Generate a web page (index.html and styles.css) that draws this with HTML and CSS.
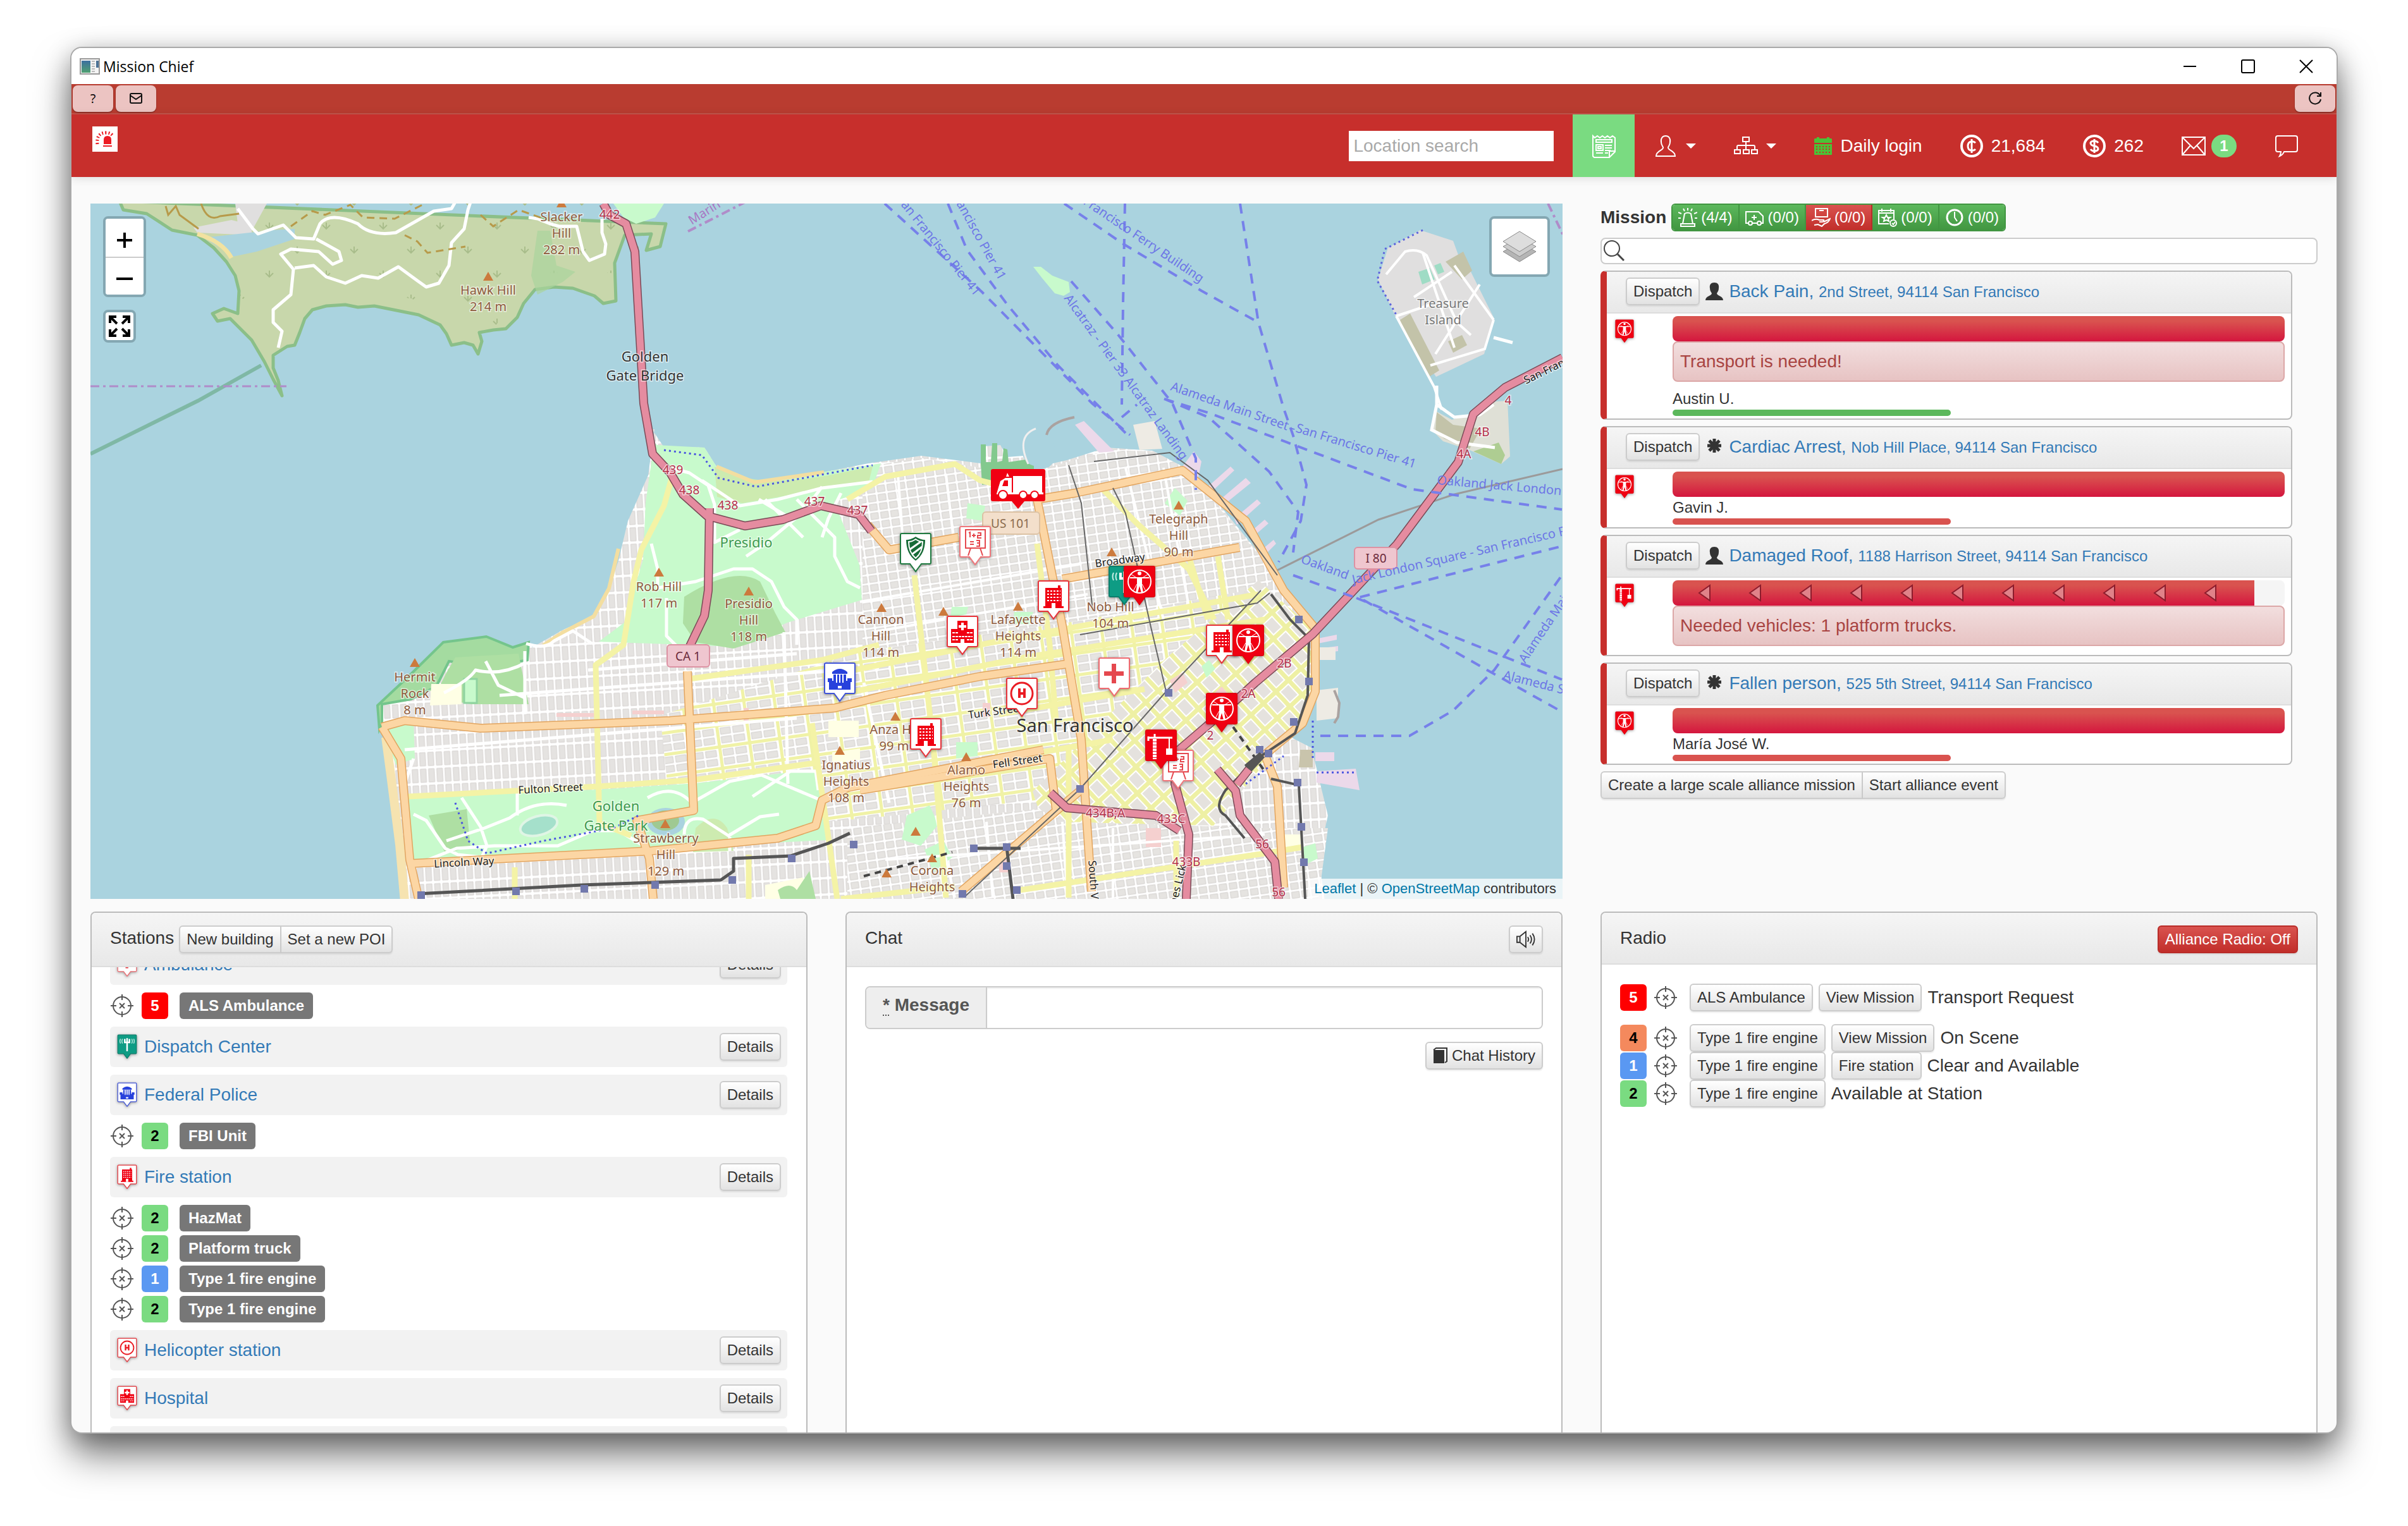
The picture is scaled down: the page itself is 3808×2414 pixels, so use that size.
FILE: index.html
```html
<!DOCTYPE html>
<html lang="en">
<head>
<meta charset="utf-8">
<title>Mission Chief</title>
<link rel="stylesheet" href="styles.css">
</head>
<body>
<svg class="sprite" width="0" height="0" aria-hidden="true">
  <defs>
    <path id="pin-shape" d="M4 2h44a2 2 0 0 1 2 2v44a2 2 0 0 1-2 2H35l-9 12-9-12H4a2 2 0 0 1-2-2V4a2 2 0 0 1 2-2z"/>
    <symbol id="pin-fire" viewBox="0 0 52 65">
      <use href="#pin-shape" fill="#fff" stroke="#e8333a" stroke-width="2"/>
      <path fill="#f00012" d="M13 13h20V9h4v4h2v29h3v3H10v-3h3z"/>
      <path stroke="#fff" stroke-width="1" stroke-dasharray="1 3" d="M17 14v20" opacity="0"/>
      <path stroke="#fff" stroke-width="2" stroke-dasharray="3 2" d="M16 18h21M16 23h21M16 28h21M16 33h21"/>
      <path fill="#fff" d="M23 37h6v8h-6z"/>
    </symbol>
    <symbol id="pin-hospital" viewBox="0 0 52 65">
      <use href="#pin-shape" fill="#fff" stroke="#e8333a" stroke-width="2"/>
      <path fill="#f00012" d="M18 9h16v13h10v22H29v-6h-6v6H8V22h10z"/>
      <path fill="#fff" d="M24 12h4v4h4v4h-4v4h-4v-4h-4v-4h4z"/>
      <path stroke="#fff" stroke-width="2" stroke-dasharray="4 1" d="M10 28h9M33 28h9M10 34h32M10 39h9M33 39h9"/>
    </symbol>
    <symbol id="pin-federal" viewBox="0 0 52 65">
      <use href="#pin-shape" fill="#fff" stroke="#4054d8" stroke-width="2"/>
      <path fill="#2741dc" d="M14 16q12-10 24 0v3H14zM16 20h4v15h-4zM22 20h3v15h-3zM27 20h3v15h-3zM32 20h4v15h-4zM7 26h7v4h24v-4h7v6h-2v12H9V32H7z"/>
      <path fill="#fff" d="M20 20h2v13h-2zM25 20h2v13h-2zM30 20h2v13h-2zM23 38h6v4h-6z"/>
    </symbol>
    <symbol id="pin-heli" viewBox="0 0 52 65">
      <use href="#pin-shape" fill="#fff" stroke="#e8333a" stroke-width="2"/>
      <circle cx="26" cy="26" r="17" fill="none" stroke="#ea1c24" stroke-width="3"/>
      <path fill="none" stroke="#ea1c24" stroke-width="4" d="M22 18v15M30 18v15M22 26h8"/>
    </symbol>
    <symbol id="pin-cross" viewBox="0 0 52 65">
      <use href="#pin-shape" fill="#fff" stroke="#f06a70" stroke-width="2"/>
      <path fill="#e5484e" d="M22 11h7v12h12v7H29v12h-7V30H10v-7h12z"/>
    </symbol>
    <symbol id="pin-school" viewBox="0 0 52 65">
      <use href="#pin-shape" fill="#fff" stroke="#f0777c" stroke-width="2"/>
      <path fill="none" stroke="#e5484e" stroke-width="2" d="M11 7h31v29H11zM19 36l-4 12M34 36l4 12M16 12l2-1v8M24 13v6M21 16h6M30 12h5v4h-5v4h6M18 26h6M18 30h6M28 24h5v9h-5M29 28h4"/>
    </symbol>
    <symbol id="pin-shield" viewBox="0 0 52 65">
      <use href="#pin-shape" fill="#fff" stroke="#1f7a40" stroke-width="2"/>
      <path fill="#176b37" d="M26 7q8 5 15 5 0 22-15 33Q11 34 11 12q7 0 15-5z"/>
      <path fill="none" stroke="#fff" stroke-width="2" d="M26 11q6 4 11 4 0 17-11 26Q15 32 15 15q5 0 11-4z"/>
      <path stroke="#fff" stroke-width="3" d="M17 27l17-12M20 35l16-12"/>
    </symbol>
    <symbol id="pin-dispatch" viewBox="0 0 52 65">
      <use href="#pin-shape" fill="#0e9c84" stroke="#0b7f6c" stroke-width="2"/>
      <path fill="none" stroke="#fff" stroke-width="4" d="M26 20v24M20 12v9h12v-9M26 10v10"/>
      <path fill="none" stroke="#c6efe6" stroke-width="2" d="M14 12q-3 6 0 12M9 12q-3 6 0 12M38 12q3 6 0 12M43 12q3 6 0 12"/>
    </symbol>
    <symbol id="pin-person" viewBox="0 0 52 65">
      <use href="#pin-shape" fill="#f00012" stroke="#e30010" stroke-width="2"/>
      <circle cx="26" cy="26" r="18" fill="none" stroke="#fff" stroke-width="2"/>
      <circle cx="26" cy="13" r="3" fill="#fff"/>
      <path fill="#fff" d="M11 19h30v2H30v11l2 12h-3l-3-11-3 11h-3l2-12V21H11z"/>
      <path fill="none" stroke="#fff" d="M12 14l11 7M40 14l-11 7M22 30l-6 11M30 30l6 11"/>
    </symbol>
    <symbol id="pin-crane" viewBox="0 0 52 65">
      <use href="#pin-shape" fill="#f00012" stroke="#e30010" stroke-width="2"/>
      <path fill="none" stroke="#fff" stroke-width="3" d="M6 14h38M6 12v7M16 8v6"/>
      <path stroke="#fff" stroke-width="6" stroke-dasharray="4 1" d="M16 16v32"/>
      <path stroke="#fff" stroke-width="2" d="M39 14v18"/>
      <path fill="#fff" d="M34 31h10v10H34z"/>
    </symbol>
    <symbol id="target" viewBox="0 0 38 38">
      <circle cx="19" cy="19" r="14" fill="none" stroke="#555" stroke-width="2"/>
      <path stroke="#555" stroke-width="2" d="M19 1v9M19 28v9M1 19h9M28 19h9M15 15l8 8M23 15l-8 8"/>
    </symbol>
    <symbol id="user" viewBox="0 0 30 30">
      <path d="M15 1c5 0 8 3 7 9 0 4-2 6-3 8 0 4 10 4 10 11H1c0-7 10-7 10-11-1-2-3-4-3-8-1-6 2-9 7-9z"/>
    </symbol>
    <symbol id="asterisk" viewBox="0 0 30 30">
      <path stroke="#333" stroke-width="5" d="M15 2v22M4 13h22M7 5l16 16M23 5L7 21"/>
    </symbol>
  </defs>
</svg>

<main class="window">
  <header class="titlebar">
    <svg class="app-icon" viewBox="0 0 32 26" aria-hidden="true">
      <defs><linearGradient id="app" x2="0" y2="1"><stop stop-color="#3b6fa0"/><stop offset="1" stop-color="#4fa070"/></linearGradient></defs>
      <path fill="#f4f4f4" stroke="#999" stroke-width="2" d="M1 1h30v24H1z"/>
      <path fill="url(#app)" d="M3 4h14v19H3z"/>
      <path stroke="#bbb" stroke-width="2" d="M19 5h5M19 9h5M19 13h5M19 17h5M19 21h5"/>
      <path fill="#4c7396" d="M26 4h4v11h-4z"/>
    </svg>
    <h1 class="window-title">Mission Chief</h1>
    <div class="window-controls">
      <button class="window-button" aria-label="Minimize"><svg viewBox="0 0 24 24"><path d="M2 12h20"/></svg></button>
      <button class="window-button" aria-label="Maximize"><svg viewBox="0 0 24 24"><rect x="2" y="2" width="20" height="20" rx="2"/></svg></button>
      <button class="window-button" aria-label="Close"><svg viewBox="0 0 24 24"><path d="M2 2l20 20M22 2L2 22"/></svg></button>
    </div>
  </header>

  <div class="toolbar">
    <button class="tool-button">?</button>
    <button class="tool-button" aria-label="Mail"><svg viewBox="0 0 24 24"><rect x="3" y="4" width="18" height="15" rx="2"/><path d="M3 7l9 6 9-6"/></svg></button>
    <button class="tool-button tool-end" aria-label="Reload"><svg viewBox="0 0 24 24"><path d="M20 7a9 9 0 1 0 1 6M21 2v6h-6"/></svg></button>
  </div>

  <nav class="navbar">
    <a class="brand" href="#" aria-label="Home"><svg viewBox="0 0 40 40"><path fill="#ec1c24" d="M18 28v-7q0-6 6-6t6 6v7zM17 30h14v2H17z"/><path fill="none" stroke="#ec1c24" stroke-width="5" stroke-dasharray="2 3" d="M8 28q-2-18 14-18 8 0 11 6"/></svg></a>
    <input class="location" type="text" placeholder="Location search" aria-label="Location search">
    <a class="nav-item active" href="#" aria-label="News"><svg class="nav-icon" viewBox="0 0 38 38"><path d="M2 3l3 3 4-3 4 3 4-3 4 3 4-3 4 3 4-3 4 3v22l-9 9H4l-2-2zM37 27h-9v9M7 9h25v4H7zM7 17h11v9H7zM10 20h5v3h-5zM21 18h11M21 22h11M21 26h9M7 30h11M21 30h5"/></svg></a>
    <a class="nav-item" href="#" aria-label="Profile"><svg class="nav-icon" viewBox="0 0 38 38"><path d="M19 3c5 0 8 4 7 10 0 4-2 6-3 8-1 5 11 5 11 14H4c0-9 12-9 11-14-1-2-3-4-3-8-1-6 2-10 7-10z"/></svg><span class="caret"></span></a>
    <a class="nav-item" href="#" aria-label="Alliance"><svg class="nav-icon" viewBox="0 0 38 38"><path d="M14 5h10v7H14zM19 12v13M5 25v-5q0-2 2-2h24q2 0 2 2v5M1 25h9v6H1zM15 25h9v6h-9zM28 25h9v6h-9z"/></svg><span class="caret"></span></a>
    <a class="nav-item" href="#"><svg class="calendar" viewBox="0 0 28 30"><path fill="#4bc237" d="M0 4q0-1 2-1h2V1h4v2h12V1h4v2h2q2 0 2 1v6H0zM0 12h28v16q0 1-1 1H1q-1 0-1-1z"/><path stroke="#c72f2c" stroke-width="2" stroke-dasharray="2 3" d="M3 16h22M3 20h22M3 25h22"/></svg>Daily login</a>
    <a class="nav-item" href="#"><svg class="coin" viewBox="0 0 36 36"><circle cx="18" cy="18" r="16"/><path d="M24 13q-3-3-7-2-5 1-5 7t5 7q4 1 7-2M18 7v22"/></svg>21,684</a>
    <a class="nav-item" href="#"><svg class="coin" viewBox="0 0 36 36"><circle cx="18" cy="18" r="16"/><path d="M24 13q-2-3-6-3-5 0-6 3 0 4 6 5t6 5q-1 3-6 3-4 0-6-3M18 7v22"/></svg>262</a>
    <a class="nav-item mail" href="#" aria-label="Messages"><svg class="nav-icon" viewBox="0 0 38 38"><path d="M1 5h36v28H1zM1 5l18 18L37 5M1 33l13-15M37 33L24 18"/></svg><span class="count">1</span></a>
    <a class="nav-item" href="#" aria-label="Chat"><svg class="nav-icon" viewBox="0 0 38 38"><path d="M5 3h28q3 0 3 3v19q0 3-3 3H15q-2 5-7 7 2-3 2-7H5q-3 0-3-3V6q0-3 3-3z"/></svg></a>
  </nav>

  <div class="content">
    <section class="map" aria-label="Map">
      <svg class="map-canvas" viewBox="143 322 2328 1100" preserveAspectRatio="xMidYMid slice">
        <defs>
          <pattern id="avenues" width="13" height="26" patternUnits="userSpaceOnUse" patternTransform="rotate(-3)">
            <path fill="#fff" d="M0 0h13v26H0z"/><path fill="#e5e3e1" stroke="#d5d2d0" d="M2 2h9v21H2z"/>
          </pattern>
          <pattern id="blocks" width="16" height="14" patternUnits="userSpaceOnUse" patternTransform="rotate(-8)">
            <path fill="#fff" d="M0 0h16v14H0z"/><path fill="#e6e4e1" stroke="#d3d0ce" d="M2 2h12v10H2z"/>
          </pattern>
          <pattern id="avenues-center" width="48" height="34" patternUnits="userSpaceOnUse" patternTransform="rotate(-8)">
            <path fill="#fff" d="M0 0h48v34H0z"/><path fill="#f0f2a6" d="M0 0h48v5H0zM0 0h5v34H0z"/><path fill="#e6e4e1" stroke="#d3d0ce" d="M7 7h16v10H7zM27 7h17v10H27zM7 21h16v10H7zM27 21h17v10H27z"/>
          </pattern>
          <pattern id="soma" width="27" height="32" patternUnits="userSpaceOnUse" patternTransform="rotate(-43)">
            <path fill="#eef0a4" d="M0 0h27v32H0z"/><path fill="#e5e2de" stroke="#fff" stroke-width="2" d="M5 5h18v23H5z"/>
          </pattern>
          <pattern id="scrub" width="90" height="76" patternUnits="userSpaceOnUse">
            <path fill="none" stroke="#a9bd8b" stroke-width="2" d="M20 20v-10M14 14l6 6 6-6M66 58v-10M60 52l6 6 6-6"/>
          </pattern>
        </defs>
        <path fill="#aad3df" d="M143 322h2328v1100H143z"/>

        <!-- Marin headlands -->
        <path fill="#c8d7ab" stroke="#8bbf88" stroke-width="5" stroke-linejoin="round" d="M189 318l6 14 37 6 40 26 40 8 26 20 20 22 14 22 6 24-2 36-22-8-18 8 8 12 20-4 14 14 20 20 20 34 14 28 14 26-6-24-8-20 0-20 22-14 12-2 8-20 8-22 12-14 22-6 30-2 20 4 26-2 40 8 30 6 34 16 10 14 8 18 20-4 14 4 8 14 6-20-4-14 22-4 20-2 18-18 10-22 18-22 30-4 30 2 34 12 14 12 20-4-2-60 16-44 42-2-8 26 22-6 9-36z"/>
        <path fill="url(#scrub)" d="M330 322h680v110H850l-80 100-120-60-200-20-40 60-40-60z"/>
        <path fill="#a9d49c" opacity=".7" d="M850 365l20 0 10 55 30 10-20 16-40 20-10-30z"/>
        <path fill="#c8facc" d="M970 322h80l-14 22-30 10-20-10z"/>
        <path fill="#e0dfdf" d="M306 360l60-12 32 8 0 16-86-4zM372 322h50l-22 40-24-8z"/>
        <path fill="#aad3df" d="M322 376l110-12 34-2 0 16-60 20-38 8-16-12z"/>
        <path fill="none" stroke="#f2e2a0" stroke-width="7" d="M312 370q40 12 54 38"/>
        <path fill="none" stroke="#fff" stroke-width="5" stroke-linejoin="round" d="M376 330l24 32 8 8 40-14 20 20 28 2 10-24q16-20 60 0 20 20 60 14l60-34 28-4 8-14M500 378l36 20 4 14-14 6-22-20-44-4-16 8 20 24-4 40-28 24 0 20 14 14-6 26M466 424l30-4 20 18 30 10 26-12 26 4 32-18 30 22 14 10 20-6 16-28 4-36 20-22 6-30 8-24-6-18M836 344l14 2 20 8 14 4 28 0 10 40 10 14 24-10 2-16-6-18 0-22"/>
        <path fill="none" stroke="#b79a4a" stroke-width="3" stroke-dasharray="12 8" d="M460 358l34-24 20 6 40-16 20 20 50 2 60-30M640 372l20 10 16 18 60-10M760 340l20 18 40-26 40 14"/>
        <path fill="none" stroke="#b79a4a" stroke-width="3" d="M262 326l4 14 12-14 6 14 30 22M318 322q10 30 30 20l30-4"/>
        <path fill="none" stroke="#7fb8a5" stroke-width="6" d="M143 718l170-84 100-56"/>
        <path fill="none" stroke="#b08cc9" stroke-width="3" stroke-dasharray="14 6 4 6" d="M143 611h310"/>
        <path fill="none" stroke="#b08cc9" stroke-width="4" stroke-dasharray="14 6 4 6" d="M1088 366l90-46M2448 322l24 50"/>

        <!-- San Francisco landmass and parks -->
        <path fill="url(#avenues)" d="M1031 679l18 27 65 2 19 30 60 25 110-16 70-14 84-12 94 12 5-27 26-2 11 19 26-2q16 44 46 12l22-5 63-20 73 5 47 25 52 53 95 116 62 83v106l-5 29-37 39 37 19 26 107-15 68 10 64H636l-21-205-11-67-7-34 21-20 26-24 57-56 68-9 42 17 21-8 10 8 47-27 50-22 24-44 15-44 15-63 32-72 10-73z"/>
        <path fill="url(#blocks)" d="M1364 740l90-16 110 18 70 4 120-34 70 2 50 26 144 170-40 50-250 40-364 60z"/>
        <path fill="url(#avenues-center)" d="M1364 1030l330-46 290-52 40 40-170 180-180 110-280 30-330 30-20-190z"/>
        <path fill="url(#soma)" d="M1990 918l89 80v98l-10 30-60 70-90 110-270-6-16-48 210-210z"/>
        <path fill="url(#blocks)" d="M1340 1310l300-30 50 20 310 10 100 0-15 112H1340z"/>
        <path fill="#c8facc" d="M1024 690l15 14 75 4 19 30 60 25 200-30-14 40-60 20 40 100 4 56-118 36-84 38-214-8 40-30 30-100 4-90 10-70z"/>
        <path fill="#cdebb0" d="M1130 738q60 36 180 14l70-14-6 24-200 34-40-10z"/>
        <path fill="none" stroke="#f3dea0" stroke-width="6" d="M1133 738l60 25 110-16M978 868l-15 63-24 44-50 26-30 20"/>
        <path fill="#aedfa3" d="M1082 944q80-50 120-24l24 50 16 30-82 26-60-10-20-30z"/>
        <path fill="#a4dba0" stroke="#74c58c" stroke-width="4" d="M597 1116l47-44 57-56 68-9 42 17 25-8-2 28-60 12-64-10-20 40-40 20-46 8 0 32-4 8z"/>
        <path fill="#aedfa3" d="M720 1040l100-6 16 80-90 0-60-10 20-40z"/>
        <path fill="#ffffe5" d="M682 1082l48 0 0 32-50 2z"/>
        <path fill="#c8facc" stroke="#8fd3a0" stroke-width="3" d="M734 1074h20v38h-20z"/>
        <path fill="#c8facc" d="M604 1150l50-10 2 60-30 10z"/>
        <path fill="#c8facc" d="M646 1261l301-12 154-10 191-22 16 112-126 6-531 27z"/>
        <path fill="#aedfa3" d="M678 1290l60-10 6 60-40 10z"/>
        <path fill="#cdebb0" d="M1100 1310q30-30 50 0l10 36-64 2z"/>
        <ellipse cx="1053" cy="1300" rx="30" ry="22" fill="#aad3df"/><ellipse cx="1052" cy="1298" rx="22" ry="16" fill="#9fc992"/>
        <ellipse cx="852" cy="1306" rx="30" ry="15" fill="#a5e0cb" stroke="#dff5e5" stroke-width="4" transform="rotate(-15 852 1306)"/>
        <path fill="none" stroke="#f6e3b0" stroke-width="14" d="M610 1166l8 60 14 110 8 90"/>
        <path fill="#c8facc" d="M1434 1290l36-16 14 30-28 34-30-10zM1462 1344l30-14 14 26-30 24zM1604 968l30 0-6 20-26-2zM1505 960l26 0-4 16-24 2zM1512 1174h34v22l-34 4zM1530 796l28 4-4 24-26-4zM1842 796l16-24 20 20-12 24zM1900 1054l12-10 10 14-14 14zM2060 1340l20-6 4 24-20 10z"/>
        <path fill="#83c98e" d="M1551 733l0-30 8 0 0 28 8 0 2-30 8 0 0 30 8-2 2-20 6 2 2 20 40-6 0 32-82 10z"/>
        <path fill="#ffffe5" d="M1310 1140h48v26h-48zM1316 1190l44-6 0 18-44 4zM1210 1400l60-12 20 34h-80zM2030 1320h30v26h-30z"/>
        <path fill="#aedfa3" d="M1230 1408q20-14 30 0l20-30 10 44h-56z"/>
        <path fill="#f5d0cf" d="M1850 1076l20-12 8 16-20 16zM1916 1100l16-14 14 16-18 18zM1580 1356h14v24h-14zM1812 1310h24v30h-24zM1554 1112l12 0 0 22-12 0zM1176 1120h8v20h-8zM880 1128h60v6h-60zM1000 1124h50v6h-50z"/>
        <path fill="#ecd9ea" d="M1870 738l18-24 12 16-8 40zM1910 770l36-32 6 6-36 34zM1930 790l40-34 8 8-42 34zM1952 820l36-30 6 6-38 34zM1972 846l28-24 6 6-28 24zM1990 874l24-20 4 6-24 24zM2084 1010l30-6v8l-30 6zM2084 1026l32-4v8l-32 4zM2080 1190h30v14h-30zM2082 1220l62-4 6 34-68-12zM1700 672l14-6 48 48-24 2z"/>
        <path fill="#eeebe4" d="M1792 672l34-6 12 44-36 2zM2082 1024h30v20h-30zM2082 1092l34-4v48l-34 4z"/>
        <path fill="#c9c4ac" d="M2056 1186h20v28h-22z"/>
        <path fill="none" stroke="#aaa2a0" stroke-width="4" d="M1655 688q4-20 44-28M2110 1092l8 20-2 22-6 10"/>
        <circle cx="1642" cy="712" r="26" fill="#aad3df"/><path fill="none" stroke="#f0efef" stroke-width="3" d="M1626 734q-20-44 12-56"/>
        <path fill="#c8facc" d="M1634 422l12 0 18 14 26 10 2 16-10 6-14-4-20-24z"/>

        <!-- minor roads -->
        <path fill="none" stroke="#fff" stroke-width="5" stroke-linejoin="round" d="M654 1288l20 10 30 44 20 10 38 4 8-18-10-30-30-46M706 1330l60-20 40-16q40-30 90-20M818 1250v40M662 1366l60-24 60-4 60 0 40 0 56-24 40 0 50 30M1024 1262q40-24 70 8l60-34 50-10 90 38M1082 1320q0-30 30-24l40 26 50-30 30-4M1154 1324v22M1190 1260l60-40 40 0 4 30M1030 860l10 40 0 30 60-10 60-20 30 0 30 20 20 40 20 20v40M1110 760l60 40 60-10 70-18 80-10M1060 740l30 8 30 20 10 30 0 60 40-20M1180 880l30-20 60-50 30-40M1260 790l60 60 0 30 20 40 20 10M1330 780l-20 40-10 30M1250 820l-50-30M1270 850l-60-60M1054 946l0 60 20 20M768 1046l20 38 42 20 2 24M832 1018q30 10 44-4l30-16 30 20M702 1096q40-20 50-36 40 10 80-12"/>
        <path fill="none" stroke="#fff" stroke-width="5" d="M830 1030v100M1240 1000l6 240M640 1240l14-40M1366 1080l40 190M640 1186l620-50M790 1100l600-44M930 1060l330-26"/>
        <path fill="none" stroke="#fff" stroke-width="4" d="M1420 752l10 130M1496 750l14 120M1360 952l350-60M1380 1000l340-60M1480 1290l30 130M1560 1300l10 120M1680 1300l8 120M1760 1310v110M1400 1360l600-40M1780 740l60 240M1840 740l40 220"/>
        <g fill="none" stroke="#f4f3a6" stroke-width="9" stroke-linejoin="round">
          <path d="M1064 750l-14 50-36 70-12 50-16 100-30 22-14 10 6 250 50 20"/>
          <path d="M646 1260l300-16 150-10 200-28M1284 1144l40 278M814 1422v-50M1184 1422v-70M1090 1074l210-30 90-24"/>
          <path d="M1340 790l60-36 110-20 40 26 40 10M1446 910l30 270 20 240M1640 860l20 160 10 120M1300 1070l300-60 390-70M1320 1100l300-60 380-60"/>
          <path d="M1740 770l60 60 80 70 40 80M1880 880l30 100M1926 880l16 100M1420 1230l340-60M1580 1130l230-40M1600 1410l400-60 60-10M1690 1180v240M1860 1330v90M1330 1422l180-20"/>
        </g>
        <g fill="none" stroke="#e2a560" stroke-width="14" stroke-linejoin="round">
          <path d="M604 1150l36-10 60 6 60 6 300-12 260-20 80-20 150-30 140-20M604 1150l30 50 14 160 14 62M1087 1062l10 220-90 16 20 60 6 64M650 1366l380-20 200-20 60-20 10-40 40-20 310-60"/>
          <path d="M1372 830l34 40 110-20M1640 790l60-10 170-36 100 80 60 110 50 60v100l-20 50-60 50 20 50 10 160M1640 790l40 200 30 180 16 240M1680 916l280-50M1360 1250l300-50 10 80M1716 1244l-196 166"/>
        </g>
        <g fill="none" stroke="#fcd6a4" stroke-width="11" stroke-linejoin="round">
          <path d="M604 1150l36-10 60 6 60 6 300-12 260-20 80-20 150-30 140-20M604 1150l30 50 14 160 14 62M1087 1062l10 220-90 16 20 60 6 64M650 1366l380-20 200-20 60-20 10-40 40-20 310-60"/>
          <path d="M1372 830l34 40 110-20M1640 790l60-10 170-36 100 80 60 110 50 60v100l-20 50-60 50 20 50 10 160M1640 790l40 200 30 180 16 240M1680 916l280-50M1360 1250l300-50 10 80M1716 1244l-196 166"/>
        </g>

        <!-- rail -->
        <g fill="none" stroke="#666" stroke-width="2">
          <path d="M1690 736l20 60 18 170M1760 772l20 40 40 180 26 110"/>
          <path d="M1708 1004l280-50 20-16M1524 1420l184-172 136-154 150-160M1730 730l120-14 60 44 110 150"/>
        </g>
        <path fill="none" stroke="#555" stroke-width="5" stroke-linejoin="round" d="M660 1414l260-14 220-8 20-14 0-20 90-4 60-20 34-16M1540 1342h74M1592 1340l10 82M1370 1330"/>
        <path fill="none" stroke="#444" stroke-width="4" stroke-dasharray="10 8" d="M1366 1386l60-16 80-22M1950 1150l50 70"/>
        <path fill="none" stroke="#555" stroke-width="4" d="M2010 940l30 40 30 30-2 90-20 60-60 40-50 50q-20 30 0 40l30 36M2010 1232l44 10 10 180"/>
        <g fill="#7279ad">
          <path d="M660 1410h12v12h-12zM810 1404h12v12h-12zM918 1400h12v12h-12zM1030 1394h12v12h-12zM1152 1386h12v12h-12zM1246 1352h12v12h-12zM1344 1330h12v12h-12zM1534 1336h12v12h-12zM1586 1334h12v12h-12zM1586 1364h12v12h-12zM1516 1408h12v12h-12zM1602 1402h12v12h-12zM1702 1242h12v12h-12zM1842 1090h12v12h-12zM2048 974h12v12h-12zM2064 1072h12v12h-12zM2040 1136h12v12h-12zM1986 1180h12v12h-12zM2000 1186h12v12h-12zM2046 1232h12v12h-12zM2052 1302h12v12h-12zM2056 1358h12v12h-12z"/>
        </g>
        <path fill="#555" d="M1968 1210l24-20 8 8-24 26z"/>

        <!-- Treasure Island and Yerba Buena -->
        <path fill="#e0dfdf" d="M2246 364l52 17 8 22 19 25 38 76-16 56-76 36-63-93-29-61 16-50z"/>
        <path fill="#c3c3a9" d="M2214 506l16-10 46 90-16 10-40-70zM2286 414l28-16 14 30-16 14zM2290 540l22-10 8 16-22 12z"/>
        <path fill="#9fdcc5" d="M2243 430l18-6 8 18-20 8zM2268 420l10-4 6 14-10 4z"/>
        <path fill="none" stroke="#fff" stroke-width="4" d="M2192 434l30-36q20-6 34 6l48 106 22 20M2208 500l60 112 12 36M2208 500l60-20M2362 506l-14 46-86 26M2270 560l70-110M2250 400l50 150M2236 470l60-40M2300 420l62 86"/>
        <path fill="none" stroke="#5d64dd" stroke-width="3" stroke-dasharray="3 5" d="M2250 364l-60 30-12 50 30 54"/>
        <path fill="#dfe0d6" d="M2270 650l26 14 34-10 20-18 34-2 4 88-14 12-50-22-42-14-20-20z"/>
        <path fill="#c3c3a9" d="M2272 652l26 20 44 6-18 32-40-16-14-12z"/>
        <path fill="#aecd92" d="M2330 714l40-14 10 20-6 14z"/>
        <path fill="none" stroke="#fff" stroke-width="5" d="M2272 610v30l28 20 40-4 22-16M2272 640l-8 40 40 20 60 8M2362 534l30 8"/>
        <path fill="none" stroke="#9c9a9a" stroke-width="3" d="M2020 902l160-80 120-40 171-40"/>

        <!-- ferry routes west of the bridge -->
        <g fill="none" stroke="#7680ea" stroke-width="4" stroke-dasharray="16 12">
          <path d="M1399 322l154 140 174 176 60 50M1499 322l30 73 64 87 80 96 107 107M1779 322l-3 158-2 160M1694 445l73 83 87 110 37 87v50"/>
        </g>
      </svg>

      <svg class="map-canvas" viewBox="143 322 2328 1100" preserveAspectRatio="xMidYMid slice">
        <g fill="none" stroke="#7a4a57" stroke-width="14" stroke-linejoin="round">
          <path d="M954 322l10 18 26 14 14 44 14 240 14 80 28 30 20 34 38 34 60 16 60-10 60-22 60 14 20 26"/>
          <path d="M1122 804l-2 130-6 40-24 50M2471 566l-91 47-50 42-24 76-97 130-133 142-91 77-55 50-70 60-2 50 22 80-4 102"/>
          <path d="M1661 1254l26 24 141 12 37 24M1925 1217l29 34 7 39 55 73 6 59M1975 1217l-19 24"/>
        </g>
        <g fill="none" stroke="#e58ca0" stroke-width="11" stroke-linejoin="round">
          <path d="M954 322l10 18 26 14 14 44 14 240 14 80 28 30 20 34 38 34 60 16 60-10 60-22 60 14 20 26"/>
          <path d="M1122 804l-2 130-6 40-24 50M2471 566l-91 47-50 42-24 76-97 130-133 142-91 77-55 50-70 60-2 50 22 80-4 102"/>
          <path d="M1661 1254l26 24 141 12 37 24M1925 1217l29 34 7 39 55 73 6 59M1975 1217l-19 24"/>
        </g>
        <g fill="none" stroke="#7680ea" stroke-width="4" stroke-dasharray="16 12">
          <path d="M1683 322l92 63 125 75 90 50M1961 322l29 188 40 136 15 43 21 78-9 57-35 65"/>
          <path d="M1774 660l24-20M1841 631l70 22 322 121 237 32M1841 631l70 29 96 86 46 64-8 64"/>
          <path d="M2045 910l100 36 325-82M2145 946l214 85 111 44M2156 949l203 115 111 62M2088 1164h141l69-40 65-64 107-150"/>
        </g>
        <g fill="none" stroke="#4a55e0" stroke-width="3" stroke-dasharray="3 5">
          <path d="M1050 712l60 8 26 36 60 14 184-34M720 1270l20 60 30 20 90-20 110-20 40-20M1970 1240l60-44M2076 1140v60M2082 1222h60"/>
        </g>
        <g class="place-peak">
          <path fill="#cc7a3d" d="M772 430l8 14h-16zM888 314l8 14h-16zM656 1041l8 14h-16zM1042 898l8 14h-16zM1184 928l8 14h-16zM1052 1296l8 14h-16zM1328 1180l8 14h-16zM1394 954l8 14h-16zM1492 960l8 14h-16zM1610 952l8 14h-16zM1758 866l8 14h-16zM1864 792l8 14h-16zM1528 1190l8 14h-16zM1416 1126l8 14h-16zM1448 1308l8 14h-16zM1474 1350l8 14h-16zM1402 1374l8 14h-16z"/>
          <text x="888" y="350">Slacker</text><text x="888" y="376">Hill</text><text x="888" y="402">282 m</text>
          <text x="772" y="466">Hawk Hill</text><text x="772" y="492">214 m</text>
          <text x="656" y="1078">Hermit</text><text x="656" y="1104">Rock</text><text x="656" y="1130">8 m</text>
          <text x="1042" y="935">Rob Hill</text><text x="1042" y="961">117 m</text>
          <text x="1184" y="962">Presidio</text><text x="1184" y="988">Hill</text><text x="1184" y="1014">118 m</text>
          <text x="1053" y="1333">Strawberry</text><text x="1053" y="1359">Hill</text><text x="1053" y="1385">129 m</text>
          <text x="1338" y="1217">Ignatius</text><text x="1338" y="1243">Heights</text><text x="1338" y="1269">108 m</text>
          <text x="1393" y="987">Cannon</text><text x="1393" y="1013">Hill</text><text x="1393" y="1039">114 m</text>
          <text x="1416" y="1161">Anza Hill</text><text x="1414" y="1187">99 m</text>
          <text x="1610" y="987">Lafayette</text><text x="1610" y="1013">Heights</text><text x="1610" y="1039">114 m</text>
          <text x="1756" y="967">Nob Hill</text><text x="1756" y="993">104 m</text>
          <text x="1864" y="828">Telegraph</text><text x="1864" y="854">Hill</text><text x="1864" y="880">90 m</text>
          <text x="1528" y="1225">Alamo</text><text x="1528" y="1251">Heights</text><text x="1528" y="1277">76 m</text>
          <text x="1474" y="1384">Corona</text><text x="1474" y="1410">Heights</text>
        </g>
        <g class="place-park"><text x="1180" y="866">Presidio</text><text x="974" y="1283">Golden</text><text x="974" y="1314">Gate Park</text></g>
        <g class="place-bridge"><text x="1020" y="572">Golden</text><text x="1020" y="602">Gate Bridge</text></g>
        <g class="place-suburb"><text x="2282" y="487">Treasure</text><text x="2282" y="513">Island</text></g>
        <text class="place-city" x="1700" y="1158">San Francisco</text>
        <g class="road-ref">
          <text x="964" y="346">442</text><text x="1064" y="750">439</text><text x="1090" y="782">438</text><text x="1151" y="806">438</text><text x="1288" y="800">437</text><text x="1356" y="814">437</text>
          <text x="2385" y="640">4</text><text x="2344" y="690">4B</text><text x="2315" y="725">4A</text><text x="2031" y="1056">2B</text><text x="1974" y="1104">2A</text><text x="1914" y="1170">2</text>
          <text x="1748" y="1293">434B;A</text><text x="1852" y="1302">433C</text><text x="1876" y="1370">433B</text><text x="1996" y="1342">56</text><text x="2022" y="1418">56</text>
        </g>
        <g class="shield">
          <rect x="1055" y="1020" width="67" height="35" rx="5"/><text x="1088" y="1045">CA 1</text>
          <rect x="2142" y="866" width="67" height="34" rx="5"/><text x="2176" y="890">I 80</text>
          <rect class="shield-us" x="1554" y="810" width="90" height="35" rx="5"/><text class="shield-us-text" x="1598" y="835">US 101</text>
        </g>
        <g class="street">
          <text transform="translate(871 1253) rotate(-3)">Fulton Street</text>
          <text transform="translate(734 1370) rotate(-3)">Lincoln Way</text>
          <text transform="translate(1575 1131) rotate(-8)">Turk Street</text>
          <text transform="translate(1610 1210) rotate(-8)">Fell Street</text>
          <text transform="translate(1772 892) rotate(-8)">Broadway</text>
          <text transform="translate(1724 1402) rotate(86)">South Van</text>
          <text transform="translate(1866 1410) rotate(-76)">James Lick</text>
          <text transform="translate(2462 584) rotate(-26)">San Francisco</text>
        </g>
        <g class="ferry">
          <text class="ferry-marin" transform="translate(1094 356) rotate(-32)">Marin County</text>
          <text transform="translate(1424 324) rotate(51)">an Francisco Pier 41</text>
          <text transform="translate(1512 322) rotate(61)">ancisco Pier 41</text>
          <text transform="translate(1712 322) rotate(34)">Francisco Ferry Building</text>
          <text transform="translate(1682 472) rotate(54)">Alcatraz - Pier 33 Alcatraz Landing</text>
          <text transform="translate(1850 617) rotate(19)">Alameda Main Street -</text>
          <text transform="translate(2048 683) rotate(17)">San Francisco Pier 41</text>
          <text transform="translate(2272 766) rotate(5)">Oakland Jack London Square</text>
          <text transform="translate(2056 890) rotate(20)">Oakland</text>
          <text transform="translate(2140 924) rotate(-13)">Jack London Square - San Francisco Ferry</text>
          <text transform="translate(2376 1074) rotate(14)">Alameda Seaplane</text>
          <text transform="translate(2412 1050) rotate(-56)">Alameda Main</text>
        </g>

        <g class="markers">
          <path fill="#f00012" d="M1570 742h80a3 3 0 0 1 3 3v45a3 3 0 0 1-3 3h-30l-10 12-10-12h-30a3 3 0 0 1-3-3v-45a3 3 0 0 1 3-3z"/>
          <path fill="#fff" d="M1602 753h46v26h-46zM1576 781l6-20 8-5h10v23h50v3h-74z"/>
          <path fill="#f00012" d="M1585 769l3-9h6v9z"/>
          <path fill="#fff" d="M1591 754l2-6 3 6z"/>
          <g fill="#fff" stroke="#f00012" stroke-width="2"><circle cx="1586" cy="783" r="7"/><circle cx="1618" cy="783" r="6"/><circle cx="1636" cy="783" r="6"/></g>
          <use href="#pin-shield" x="1422" y="842" width="52" height="65"/>
          <use href="#pin-school" x="1516" y="831" width="52" height="65"/>
          <use href="#pin-fire" x="1640" y="917" width="52" height="65"/>
          <use href="#pin-hospital" x="1496" y="973" width="52" height="65"/>
          <use href="#pin-federal" x="1302" y="1047" width="52" height="65"/>
          <use href="#pin-fire" x="1438" y="1135" width="52" height="65"/>
          <use href="#pin-heli" x="1590" y="1071" width="52" height="65"/>
          <use href="#pin-cross" x="1736" y="1039" width="52" height="65"/>
          <use href="#pin-dispatch" x="1752" y="894" width="52" height="65"/>
          <use href="#pin-person" x="1776" y="894" width="52" height="65"/>
          <use href="#pin-fire" x="1906" y="987" width="52" height="65"/>
          <use href="#pin-person" x="1948" y="987" width="52" height="65"/>
          <use href="#pin-person" x="1906" y="1095" width="52" height="65"/>
          <use href="#pin-school" x="1837" y="1185" width="52" height="65"/>
          <use href="#pin-crane" x="1810" y="1153" width="52" height="65"/>
        </g>
      </svg>

      <div class="map-controls">
        <div class="zoom">
          <button aria-label="Zoom in"><svg viewBox="0 0 30 30"><path d="M15 3v24M3 15h24"/></svg></button>
          <button aria-label="Zoom out"><svg viewBox="0 0 30 30"><path d="M2 15h26"/></svg></button>
        </div>
        <button class="fullscreen" aria-label="Full screen"><svg viewBox="0 0 36 36"><path fill="none" stroke="#000" stroke-width="4" d="M3 13V3h10M3 3l11 11M23 3h10v10M33 3L22 14M3 23v10h10M3 33l11-11M33 23v10H23M33 33L22 22"/></svg></button>
      </div>
      <button class="layers" aria-label="Layers"><svg viewBox="0 0 52 52"><path fill="#b5b5b5" stroke="#8a8a8a" d="M0 34l26-15 26 15-26 16z"/><path fill="#ccc" stroke="#8a8a8a" d="M0 26l26-15 26 15-26 16z"/><path fill="#ddd" stroke="#8a8a8a" d="M0 18L26 2l26 16-26 16z"/></svg></button>
      <p class="attribution"><a href="#">Leaflet</a> | © <a href="#">OpenStreetMap</a> contributors</p>
    </section>

    <section class="missions">
      <div class="missions-head">
        <h2>Mission</h2>
        <div class="filters">
          <button class="filter"><svg viewBox="0 0 30 30"><path d="M4 29h22v-4H4zM7 25l3-16q5-3 10 0l3 16M15 0v4M8 1l2 4M22 1l-2 4M0 7l5 2M30 7l-5 2M0 16h4M30 16h-4"/></svg>(4/4)</button>
          <button class="filter"><svg viewBox="0 0 30 30"><path d="M5 24H1V6h20l7 7v11h-3M11 24h8M14 11v8M10 15h8"/><circle cx="8" cy="24" r="3"/><circle cx="22" cy="24" r="3"/></svg>(0/0)</button>
          <button class="filter filter-off"><svg viewBox="0 0 30 30"><path d="M6 1h19v13H6zM12 4h7M0 20q6-4 12-1h7q1 3-3 3h-4M19 22l10-5q-2 6-9 8l-4 4-6-3-6 1"/></svg>(0/0)</button>
          <button class="filter"><svg viewBox="0 0 30 30"><path d="M17 25H1V4h24v14M1 8h24M6 1v5M20 1v5M13 11l2 4h4l-3 2 1 4-4-2-4 2 1-4-3-2h4z"/><circle cx="24" cy="24" r="5"/><path d="M22 24l2 2 3-4"/></svg>(0/0)</button>
          <button class="filter"><svg viewBox="0 0 30 30"><circle cx="15" cy="15" r="12" stroke-width="3"/><path d="M15 6v9l4 6"/></svg>(0/0)</button>
        </div>
      </div>
      <div class="search">
        <svg viewBox="0 0 34 34" aria-hidden="true"><circle cx="14" cy="14" r="12"/><path stroke-width="3" d="M23 23l10 10"/></svg>
        <input type="search" aria-label="Search missions">
      </div>

      <article class="mission">
        <header class="mission-head"><button class="btn">Dispatch</button><svg class="glyph" viewBox="0 0 30 30"><use href="#user"/></svg><a href="#">Back Pain, <small>2nd Street, 94114 San Francisco</small></a></header>
        <div class="mission-body">
          <svg class="mission-pin" viewBox="0 0 52 65"><use href="#pin-person"/></svg>
          <div class="mission-detail">
            <div class="bar"><div class="bar-fill"></div></div>
            <p class="alert">Transport is needed!</p>
            <p class="patient">Austin U.</p><div class="health good"></div>
          </div>
        </div>
      </article>
      <article class="mission">
        <header class="mission-head"><button class="btn">Dispatch</button><svg class="glyph" viewBox="0 0 30 30"><use href="#asterisk"/></svg><a href="#">Cardiac Arrest, <small>Nob Hill Place, 94114 San Francisco</small></a></header>
        <div class="mission-body">
          <svg class="mission-pin" viewBox="0 0 52 65"><use href="#pin-person"/></svg>
          <div class="mission-detail">
            <div class="bar"><div class="bar-fill"></div></div>
            <p class="patient">Gavin J.</p><div class="health"></div>
          </div>
        </div>
      </article>
      <article class="mission">
        <header class="mission-head"><button class="btn">Dispatch</button><svg class="glyph" viewBox="0 0 30 30"><use href="#user"/></svg><a href="#">Damaged Roof, <small>1188 Harrison Street, 94114 San Francisco</small></a></header>
        <div class="mission-body">
          <svg class="mission-pin" viewBox="0 0 52 65"><use href="#pin-crane"/></svg>
          <div class="mission-detail">
            <div class="bar"><div class="bar-fill" style="width: 95%"><svg width="100%" height="40"><defs><pattern id="arrows" width="80" height="40" patternUnits="userSpaceOnUse"><path fill="#e08289" stroke="#8c1c2c" stroke-width="2" d="M42 20l17-12v24z"/></pattern></defs><rect width="100%" height="40" fill="url(#arrows)"/></svg></div></div>
            <p class="alert">Needed vehicles: 1 platform trucks.</p>
          </div>
        </div>
      </article>
      <article class="mission">
        <header class="mission-head"><button class="btn">Dispatch</button><svg class="glyph" viewBox="0 0 30 30"><use href="#asterisk"/></svg><a href="#">Fallen person, <small>525 5th Street, 94114 San Francisco</small></a></header>
        <div class="mission-body">
          <svg class="mission-pin" viewBox="0 0 52 65"><use href="#pin-person"/></svg>
          <div class="mission-detail">
            <div class="bar"><div class="bar-fill"></div></div>
            <p class="patient">María José W.</p><div class="health"></div>
          </div>
        </div>
      </article>
      <div class="btn-group"><button class="btn">Create a large scale alliance mission</button><button class="btn">Start alliance event</button></div>
    </section>

    <section class="panel">
      <header class="panel-head"><h2>Stations</h2><div class="btn-group"><button class="btn">New building</button><button class="btn">Set a new POI</button></div></header>
      <div class="station-scroll">
        <div class="stations">
          <div class="station"><svg class="station-pin" viewBox="0 0 52 65"><use href="#pin-cross"/></svg><a href="#">Ambulance</a><button class="btn">Details</button></div>
          <ul class="vehicles">
            <li><svg class="target"><use href="#target"/></svg><span class="status s5">5</span><a class="vehicle" href="#">ALS Ambulance</a></li>
          </ul>
          <div class="station"><svg class="station-pin" viewBox="0 0 52 65"><use href="#pin-dispatch"/></svg><a href="#">Dispatch Center</a><button class="btn">Details</button></div>
          <div class="station"><svg class="station-pin" viewBox="0 0 52 65"><use href="#pin-federal"/></svg><a href="#">Federal Police</a><button class="btn">Details</button></div>
          <ul class="vehicles">
            <li><svg class="target"><use href="#target"/></svg><span class="status s2">2</span><a class="vehicle" href="#">FBI Unit</a></li>
          </ul>
          <div class="station"><svg class="station-pin" viewBox="0 0 52 65"><use href="#pin-fire"/></svg><a href="#">Fire station</a><button class="btn">Details</button></div>
          <ul class="vehicles">
            <li><svg class="target"><use href="#target"/></svg><span class="status s2">2</span><a class="vehicle" href="#">HazMat</a></li>
            <li><svg class="target"><use href="#target"/></svg><span class="status s2">2</span><a class="vehicle" href="#">Platform truck</a></li>
            <li><svg class="target"><use href="#target"/></svg><span class="status s1">1</span><a class="vehicle" href="#">Type 1 fire engine</a></li>
            <li><svg class="target"><use href="#target"/></svg><span class="status s2">2</span><a class="vehicle" href="#">Type 1 fire engine</a></li>
          </ul>
          <div class="station"><svg class="station-pin" viewBox="0 0 52 65"><use href="#pin-heli"/></svg><a href="#">Helicopter station</a><button class="btn">Details</button></div>
          <div class="station"><svg class="station-pin" viewBox="0 0 52 65"><use href="#pin-hospital"/></svg><a href="#">Hospital</a><button class="btn">Details</button></div>
          <div class="station"></div>
        </div>
      </div>
    </section>

    <section class="panel">
      <header class="panel-head"><h2>Chat</h2><button class="btn sound" aria-label="Sound"><svg viewBox="0 0 32 28"><path d="M1 9h5v10H1zM6 9l10-8v26L6 19M19 10q3 4 0 8M23 7q5 7 0 14M27 4q7 10 0 20"/></svg></button></header>
      <div class="panel-body">
        <form class="message"><label for="message"><abbr title="required">*</abbr> Message</label><input id="message" type="text"></form>
        <button class="btn history"><svg viewBox="0 0 24 26"><path fill="#333" d="M1 4h17v21H1z"/><path fill="none" stroke="#333" stroke-width="2" d="M1 4l4-3h17v21l-3 2"/></svg>Chat History</button>
      </div>
    </section>

    <section class="panel">
      <header class="panel-head radio-head"><h2>Radio</h2><button class="btn btn-danger">Alliance Radio: Off</button></header>
      <ul class="radio">
        <li class="request"><span class="status s5">5</span><svg class="target"><use href="#target"/></svg><button class="btn">ALS Ambulance</button><button class="btn">View Mission</button>Transport Request</li>
        <li><span class="status s4">4</span><svg class="target"><use href="#target"/></svg><button class="btn">Type 1 fire engine</button><button class="btn">View Mission</button>On Scene</li>
        <li><span class="status s1">1</span><svg class="target"><use href="#target"/></svg><button class="btn">Type 1 fire engine</button><button class="btn">Fire station</button>Clear and Available</li>
        <li><span class="status s2">2</span><svg class="target"><use href="#target"/></svg><button class="btn">Type 1 fire engine</button>Available at Station</li>
      </ul>
    </section>
  </div>
</main>
</body>
</html>
```
FILE: styles.css
```css
* { box-sizing: border-box; }
body {
  margin: 0;
  height: 100vh;
  padding: 76px 113px 148px;
  display: flex;
  background: #fff;
  color: #333;
  font: 28px/40px "Liberation Sans", Arial, sans-serif;
}
h1, h2, p, ul { margin: 0; padding: 0; }
ul { list-style: none; }
h2 { font-size: 28px; line-height: 40px; font-weight: 400; }
a { color: #337ab7; text-decoration: none; }
button, input { font: inherit; color: inherit; margin: 0; }
svg { display: block; flex: none; }
.sprite { position: absolute; }

.window {
  flex: 1;
  min-width: 0;
  display: flex;
  flex-direction: column;
  overflow: hidden;
  background: #fafafa;
  border-radius: 16px;
  box-shadow: 0 0 0 2px #aaa, 0 36px 60px rgba(0, 0, 0, .5), 0 8px 40px rgba(0, 0, 0, .3);
}
.titlebar {
  flex: none;
  display: flex;
  align-items: center;
  height: 57px;
  padding: 0 24px 0 13px;
  background: #fff;
}
.app-icon { width: 32px; height: 26px; margin-right: 5px; }
.window-title { font: 400 23px/30px "Open Sans", sans-serif; color: #000; }
.window-controls { display: flex; gap: 44px; margin-left: auto; }
.window-button { display: grid; place-items: center; width: 48px; height: 48px; padding: 0; border: 0; background: none; }
.window-button svg { width: 24px; height: 24px; fill: none; stroke: #000; stroke-width: 2px; }

.toolbar {
  flex: none;
  display: flex;
  gap: 4px;
  height: 48px;
  padding: 2px;
  background: #b93c30;
  border-bottom: 2px solid #c3564c;
}
.tool-button {
  display: grid;
  place-items: center;
  width: 64px;
  height: 42px;
  padding: 0;
  border: 0;
  border-radius: 8px;
  background: #ecc4c2;
  box-shadow: 0 1px 2px rgba(0, 0, 0, .4);
  color: #000;
  font: 400 20px/30px "Open Sans", sans-serif;
}
.tool-button svg { width: 24px; height: 24px; fill: none; stroke: #111; stroke-width: 2px; }
.tool-end { margin-left: auto; }

.navbar {
  flex: none;
  display: flex;
  align-items: center;
  height: 99px;
  padding: 0 30px 0 33px;
  background: #c72f2c;
  box-shadow: 0 2px 14px rgba(0, 0, 0, .12);
}
.brand { align-self: flex-start; margin: 19px auto 0 0; width: 40px; height: 40px; background: #fff; }
.location {
  width: 324px;
  height: 48px;
  margin-right: 30px;
  padding: 0 7px;
  border: 0;
  background: #fff;
}
.location::placeholder { color: #a9a9a9; opacity: 1; }
.nav-item { display: flex; align-items: center; gap: 13px; height: 100%; padding: 0 30px; color: #fff; }
.nav-item.active { background: #7adb81; }
.nav-icon { width: 38px; height: 38px; fill: none; stroke: #fff; stroke-width: 2px; }
.coin { width: 36px; height: 36px; fill: none; stroke: #fff; stroke-width: 4px; }
.coin path { stroke-width: 3px; }
.calendar { width: 28px; height: 30px; }
.caret { border: 8px solid transparent; border-top-color: #fff; border-bottom: 0; }
.mail { gap: 9px; }
.count { width: 40px; border-radius: 18px; background: #7adb81; text-align: center; font-weight: 700; font-size: 24px; line-height: 36px; }

.content {
  flex: 1;
  min-height: 0;
  display: grid;
  grid-template-columns: repeat(3, minmax(0, 1fr));
  grid-template-rows: 1100px minmax(0, 1fr);
  gap: 20px 60px;
  padding: 42px 30px 0;
}

.map { grid-column: span 2; position: relative; overflow: hidden; background: #aad3df; }
.map-canvas { position: absolute; inset: 0; width: 100%; height: 100%; font-family: "Noto Sans", sans-serif; }
.map-canvas text { text-anchor: middle; paint-order: stroke; stroke: rgba(255, 255, 255, .6); stroke-width: 3px; }
.place-peak { font-size: 20px; }
.place-peak text { fill: #8e5a3c; }
.place-park { font-size: 22px; }
.place-park text { fill: #3f9a4f; }
.place-bridge { font-size: 22px; }
.place-bridge text { fill: #333; }
.place-suburb { font-size: 20px; }
.place-suburb text { fill: #777; }
.place-city { font-size: 29px; fill: #333; }
.road-ref { font-size: 19px; }
.road-ref text { fill: #b5304a; }
.shield { font-size: 19px; }
.shield rect { fill: #efc6cf; stroke: #dc92a3; stroke-width: 2px; }
.shield text { fill: #6b2a3a; stroke: none; }
.shield .shield-us { fill: #f3dfcb; stroke: #dcc2a4; }
.shield .shield-us-text { fill: #8a6a4c; }
.street { font-size: 17px; }
.street text { fill: #222; }
.ferry { font-size: 20px; }
.map-canvas .ferry text { fill: #6d76e6; stroke: none; text-anchor: start; }
.map-canvas .ferry .ferry-marin { fill: #a878c4; }
.markers use, .mission-pin, .station-pin { filter: drop-shadow(0 1px 2px rgba(0, 0, 0, .4)); }

.map-controls { position: absolute; top: 20px; left: 20px; display: grid; gap: 20px; justify-items: start; }
.map button { display: grid; place-items: center; padding: 0; border: 0; background: #fff; }
.zoom { border: 4px solid #84a7b2; border-radius: 8px; background: #fff; }
.zoom button { width: 60px; height: 60px; padding-top: 8px; border-radius: 4px; }
.zoom button + button { border-top: 2px solid #ccc; border-radius: 0 0 4px 4px; }
.zoom svg { width: 30px; height: 30px; stroke: #000; stroke-width: 4px; }
.map .zoom button { padding-top: 8px; }
.map .zoom button + button { border-top: 2px solid #ccc; }
.map .fullscreen, .map .layers { border: 4px solid #84a7b2; border-radius: 8px; }
.fullscreen { width: 52px; height: 52px; }
.fullscreen svg { width: 36px; height: 36px; }
.layers { position: absolute; top: 20px; right: 20px; width: 96px; height: 96px; }
.layers svg { width: 52px; height: 52px; }
.attribution { position: absolute; right: 0; bottom: 0; padding: 0 10px; background: rgba(255, 255, 255, .75); font-size: 22px; line-height: 32px; }
.attribution a { color: #0078a8; }

.btn {
  display: inline-flex;
  align-items: center;
  flex: none;
  height: 44px;
  padding: 0 10px;
  border: 2px solid #ccc;
  border-radius: 6px;
  background: linear-gradient(#fff, #e2e2e2);
  box-shadow: 0 2px 2px rgba(0, 0, 0, .08);
  color: #333;
  font-size: 24px;
  line-height: 36px;
  white-space: nowrap;
}
.btn-danger { border-color: #b92c28; background: linear-gradient(#d9534f, #c12e2a); color: #fff; }
.btn-group { display: flex; }
.btn-group .btn:first-child { border-radius: 6px 0 0 6px; }
.btn-group .btn + .btn { border-left: 0; border-radius: 0 6px 6px 0; }

.missions-head { display: flex; align-items: center; gap: 8px; }
.missions-head h2 { font-weight: 700; }
.filters { display: flex; border: 2px solid #419641; border-radius: 6px; overflow: hidden; }
.filter {
  display: flex;
  align-items: center;
  gap: 6px;
  height: 40px;
  padding: 0 9px;
  border: 0;
  border-right: 2px solid #419641;
  background: linear-gradient(#5cb85c, #419641);
  color: #fff;
  font-size: 24px;
}
.filter:last-child { border-right: 0; }
.filter-off { border-right-color: #b92c28; background: linear-gradient(#d9534f, #c12e2a); }
.filter svg { width: 30px; height: 30px; fill: none; stroke: #fff; stroke-width: 2px; }
.search { position: relative; margin: 10px 0; height: 42px; }
.search input { display: block; width: 100%; height: 42px; padding: 0 44px; border: 2px solid #ccc; border-radius: 8px; background: #fff; }
.search svg { position: absolute; left: 4px; top: 3px; width: 34px; height: 34px; fill: none; stroke: #444; stroke-width: 2px; }

.mission {
  margin: 0 40px 10px 0;
  border: 2px solid #bbb;
  border-left: 10px solid #c72f2c;
  border-radius: 8px;
  background: #fff;
}
.mission-head {
  display: flex;
  align-items: center;
  height: 66px;
  padding: 0 30px 2px;
  border-bottom: 2px solid #ddd;
  border-radius: 0 6px 0 0;
  background: linear-gradient(#f5f5f5, #e8e8e8);
}
.glyph { width: 30px; height: 30px; margin: 0 8px; fill: #333; }
.mission-head small { font-size: 24px; }
.mission-body { display: flex; padding: 4px 10px 4px 12px; }
.mission-pin { width: 32px; height: 38px; margin: 5px 60px 0 0; }
.mission-detail { flex: 1; }
.bar { height: 40px; border-radius: 8px; background: #f5f5f5; overflow: hidden; }
.bar-fill { height: 40px; background: linear-gradient(#d9534f 20%, #d4163e); }
.alert {
  height: 64px;
  margin-bottom: 10px;
  padding: 0 10px;
  border: 2px solid #dca7a7;
  border-radius: 8px;
  background: linear-gradient(#f2dede, #e7c3c3);
  color: #a94442;
  line-height: 60px;
}
.patient { font-size: 24px; line-height: 34px; }
.health { width: 440px; height: 10px; border-radius: 5px; background: #d9534f; }
.health.good { background: #5cb85c; }

.panel {
  display: flex;
  flex-direction: column;
  min-height: 0;
  border: 2px solid #bbb;
  border-bottom: 0;
  border-radius: 8px 8px 0 0;
  background: #fff;
}
.panel-head {
  flex: none;
  display: flex;
  align-items: flex-start;
  gap: 8px;
  height: 86px;
  padding: 20px 29px 0;
  border-bottom: 2px solid #ddd;
  border-radius: 6px 6px 0 0;
  background: linear-gradient(#f5f5f5, #e8e8e8);
}
.radio-head { height: 82px; }
.panel-head > .btn { margin-left: auto; }
.sound svg { width: 30px; height: 28px; fill: none; stroke: #333; stroke-width: 2px; }

.station-scroll { flex: 1; min-height: 0; overflow: hidden; padding: 0 30px 0 29px; }
.stations { display: grid; gap: 12px; margin-top: -36px; }
.station { display: flex; align-items: center; height: 64px; padding: 0 10px; border-radius: 6px; background: #f2f2f2; }
.station-pin { width: 34px; height: 40px; margin-right: 10px; }
.station .btn { margin-left: auto; }
.vehicles { display: grid; gap: 6px; }
.vehicles li { display: flex; align-items: center; }
.target { width: 38px; height: 38px; }
.status { width: 42px; border-radius: 6px; text-align: center; font-size: 24px; line-height: 42px; font-weight: 700; color: #000; }
.vehicles .status { margin: 0 18px 0 12px; }
.s1 { background: #5a98f2; color: #fff; }
.s2 { background: #7adb81; }
.s4 { background: #f4895d; }
.s5 { background: #f00; color: #fff; }
.vehicle { padding: 0 14px; border-radius: 6px; background: #777; color: #fff; font-size: 24px; line-height: 42px; font-weight: 700; }

.panel-body { display: grid; gap: 20px; padding: 30px 29px 0; }
.message { display: flex; height: 68px; border: 2px solid #ccc; border-radius: 8px; overflow: hidden; }
.message label { padding: 0 26px; border-right: 2px solid #ccc; background: #eee; color: #555; font-weight: 700; line-height: 56px; }
.message abbr { text-decoration: underline dotted 2px; text-underline-offset: 6px; }
.message input { flex: 1; min-width: 0; padding: 0 24px; border: 0; background: #fff; box-shadow: inset 0 2px 2px rgba(0, 0, 0, .07); }
.history { justify-self: end; gap: 6px; }
.history svg { width: 24px; height: 26px; }

.radio { padding: 30px 29px; }
.radio li { display: flex; align-items: center; gap: 9px; height: 44px; white-space: nowrap; }
.radio .request { margin-bottom: 20px; }
.radio .target { margin: 0 10px 0 2px; }
```
